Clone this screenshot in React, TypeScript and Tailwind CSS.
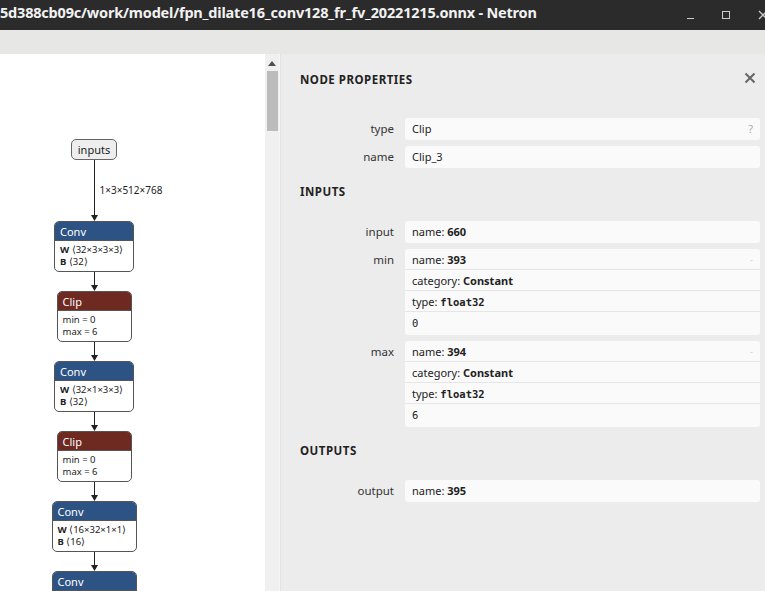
import React from 'react';

const ui = { fontFamily: '"Noto Sans", "Open Sans", sans-serif' };
const mono = { fontFamily: '"DejaVu Sans Mono", "Liberation Mono", monospace' };

function Edge({ h, label }: { h: number; label?: string }) {
  return (
    <div className="relative flex flex-col items-center" style={{ height: h }}>
      <div className="w-px flex-1 bg-[#222]" />
      <svg width="7" height="6" viewBox="0 0 7 6" className="block">
        <path d="M0 0 L7 0 L3.5 6 Z" fill="#222" />
      </svg>
      {label && (
        <span className="absolute left-[9px] top-[23px] whitespace-nowrap text-[10px] text-[#222]">{label}</span>
      )}
    </div>
  );
}

function OpNode({
  title,
  color,
  width,
  lines,
}: {
  title: string;
  color: string;
  width: string;
  lines: React.ReactNode[];
}) {
  return (
    <div className={`${width} overflow-hidden rounded-[5px] border border-[#555] bg-white`}>
      <div className={`${color} h-[19px] border-b border-[#555] px-[5px] text-[11px] leading-[19px] text-white`}>{title}</div>
      <div className="flex flex-col px-[5px] py-[3px] text-[9.5px] leading-[12px] text-[#222]">
        {lines.map((l, i) => (
          <div key={i} className="whitespace-nowrap">{l}</div>
        ))}
      </div>
    </div>
  );
}

function Graph() {
  const conv = 'bg-[#2d5384]';
  const clip = 'bg-[#6e2921]';
  return (
    <div className="flex w-[188px] flex-col items-center pt-[85px]">
      <div className="h-[21px] rounded-[5px] border border-[#666] bg-[#eeeeee] px-[6px] text-[11px] leading-[19px] text-[#222]">
        inputs
      </div>
      <Edge h={61} label="1×3×512×768" />
      <OpNode title="Conv" color={conv} width="w-[80px]" lines={[<><b>W</b>&nbsp;⟨32×3×3×3⟩</>, <><b>B</b>&nbsp;⟨32⟩</>]} />
      <Edge h={19} />
      <OpNode title="Clip" color={clip} width="w-[75px]" lines={['min = 0', 'max = 6']} />
      <Edge h={19} />
      <OpNode title="Conv" color={conv} width="w-[80px]" lines={[<><b>W</b>&nbsp;⟨32×1×3×3⟩</>, <><b>B</b>&nbsp;⟨32⟩</>]} />
      <Edge h={19} />
      <OpNode title="Clip" color={clip} width="w-[75px]" lines={['min = 0', 'max = 6']} />
      <Edge h={19} />
      <OpNode title="Conv" color={conv} width="w-[85px]" lines={[<><b>W</b>&nbsp;⟨16×32×1×1⟩</>, <><b>B</b>&nbsp;⟨16⟩</>]} />
      <Edge h={19} />
      <OpNode title="Conv" color={conv} width="w-[85px]" lines={[<><b>W</b>&nbsp;⟨16×16×3×3⟩</>, <><b>B</b>&nbsp;⟨16⟩</>]} />
    </div>
  );
}

function Row({ label, children, className = '' }: { label: string; children: React.ReactNode; className?: string }) {
  return (
    <div className={`flex items-start ${className}`}>
      <div className="w-[95px] shrink-0 pr-[1px] text-right text-[11.5px] leading-[21px] text-[#333]">{label}</div>
      <div className="ml-[10px] flex-1 overflow-hidden rounded-[3px] bg-[#fafafa]">{children}</div>
    </div>
  );
}

function Cell({
  children,
  extra,
  last = false,
  h = 'h-[21px]',
}: {
  children: React.ReactNode;
  extra?: React.ReactNode;
  last?: boolean;
  h?: string;
}) {
  return (
    <div
      className={`flex items-start justify-between px-[7px] text-[11px] leading-[21px] text-[#222] ${h} ${last ? '' : 'border-b border-[#e6e6e6]'}`}
    >
      <div className="whitespace-nowrap">{children}</div>
      {extra}
    </div>
  );
}

function Section({ title, className = '' }: { title: string; className?: string }) {
  return <div className={`text-[11.5px] font-bold leading-[16px] tracking-[0.5px] text-[#222] ${className}`}>{title}</div>;
}

function Constant({ name, value }: { name: string; value: string }) {
  return (
    <>
      <Cell extra={<span className="text-[9px] text-[#ccc]">-</span>}>
        name: <b>{name}</b>
      </Cell>
      <Cell>
        category: <b>Constant</b>
      </Cell>
      <Cell>
        type: <b style={mono} className="text-[10.5px]">float32</b>
      </Cell>
      <Cell last h="h-[23px]">
        <span style={mono} className="text-[10.5px]">{value}</span>
      </Cell>
    </>
  );
}

function Properties() {
  return (
    <div className="flex flex-1 flex-col border-l border-[#e2e2e2] bg-[#ececec] pl-[19px] pr-[5px] pt-[18px]">
      <div className="flex items-center justify-between pr-[4px]">
        <Section title="NODE PROPERTIES" />
        <svg width="12" height="12" viewBox="0 0 12 12" className="-mt-[4px]">
          <path d="M1.5 1.5 L10.5 10.5 M10.5 1.5 L1.5 10.5" stroke="#666" strokeWidth="2" />
        </svg>
      </div>
      <Row label="type" className="mt-[30px]">
        <Cell last h="h-[22px]" extra={<span className="text-[11px] text-[#aaa]">?</span>}>Clip</Cell>
      </Row>
      <Row label="name" className="mt-[6px]">
        <Cell last h="h-[22px]">Clip_3</Cell>
      </Row>
      <Section title="INPUTS" className="mt-[16px]" />
      <Row label="input" className="mt-[21px]">
        <Cell last h="h-[22px]">
          name: <b>660</b>
        </Cell>
      </Row>
      <Row label="min" className="mt-[6px]">
        <Constant name="393" value="0" />
      </Row>
      <Row label="max" className="mt-[6px]">
        <Constant name="394" value="6" />
      </Row>
      <Section title="OUTPUTS" className="mt-[16px]" />
      <Row label="output" className="mt-[21px]">
        <Cell last h="h-[22px]">
          name: <b>395</b>
        </Cell>
      </Row>
    </div>
  );
}

export default function App() {
  return (
    <div className="flex h-[591px] w-[765px] flex-col overflow-hidden" style={ui}>
      {/* title bar */}
      <div className="flex h-[30px] shrink-0 items-center bg-[#2b2b2b]">
        <div className="-mt-[4px] flex-1 whitespace-nowrap text-[14.5px] font-bold tracking-[-0.2px] text-[#f2f2f2]">
          5d388cb09c/work/model/fpn_dilate16_conv128_fr_fv_20221215.onnx - Netron
        </div>
        <div className="flex items-center">
          <div className="mt-[7px] h-px w-[7px] bg-[#ccc]" />
          <div className="ml-[28px] h-[8px] w-[8px] border border-[#ccc]" />
          <svg width="10" height="10" viewBox="0 0 10 10" className="ml-[28px] -mr-[3px]">
            <path d="M1 1 L9 9 M9 1 L1 9" stroke="#ccc" strokeWidth="1.3" />
          </svg>
        </div>
      </div>
      {/* toolbar strip */}
      <div className="h-[24px] shrink-0 bg-[#e7e7e6]" />
      <div className="flex min-h-0 flex-1">
        <div className="w-[265px] shrink-0 bg-white">
          <Graph />
        </div>
        {/* scrollbar */}
        <div className="flex w-[15px] shrink-0 flex-col items-center border-r border-[#f6f6f6] bg-[#f0f0f0] pt-[7px]">
          <svg width="8" height="5" viewBox="0 0 8 5">
            <path d="M0 5 L4 0 L8 5 Z" fill="#505050" />
          </svg>
          <div className="mt-[5px] h-[60px] w-[11px] bg-[#bcbcbc]" />
        </div>
        <Properties />
      </div>
    </div>
  );
}
